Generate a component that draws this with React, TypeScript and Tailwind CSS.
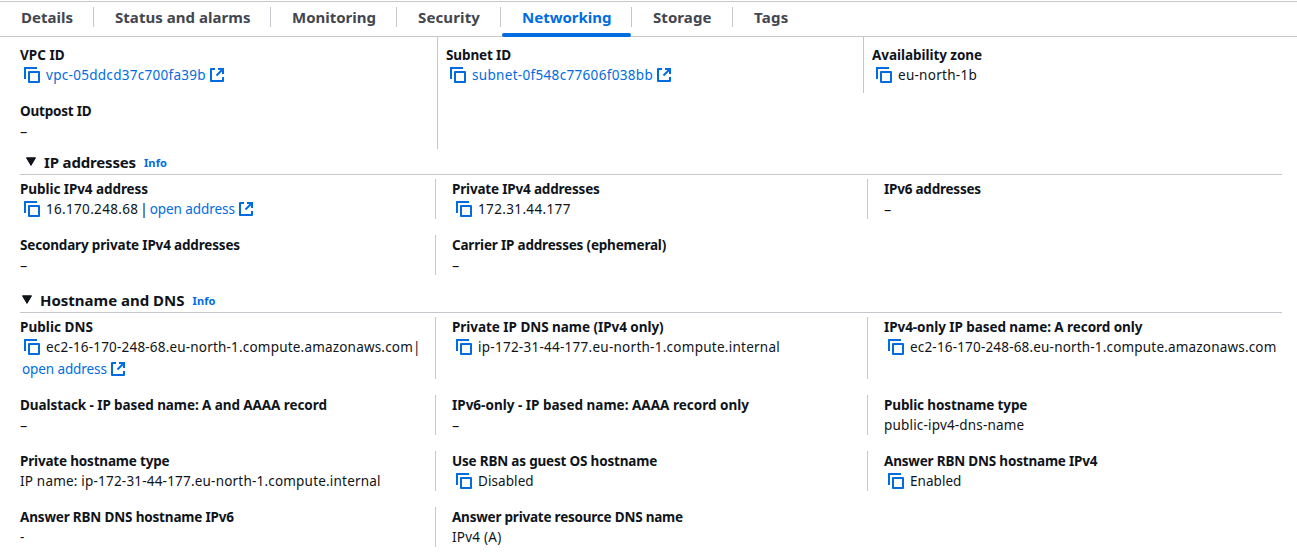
import type { ReactNode } from "react";

const CopyIcon = () => (
  <svg viewBox="0 0 16 16" className="ml-1 size-4 shrink-0" fill="none" stroke="#006ce0" strokeWidth="2">
    <path d="M1 12V1h12" />
    <path d="M5 5h10v10H5z" strokeLinejoin="round" />
  </svg>
);

const ExternalIcon = () => (
  <svg viewBox="0 0 16 16" className="size-4 shrink-0" fill="none" stroke="#006ce0" strokeWidth="2">
    <path d="M9 2h5v5" />
    <path d="m7.5 8.5 6-6" />
    <path d="M14 10v4H2V2h4" strokeLinejoin="round" />
  </svg>
);

const Caret = () => (
  <svg viewBox="0 0 12 10" className="mt-px h-[10px] w-3 shrink-0">
    <path d="M1.5.8h9L6 8.4z" fill="#0f141a" stroke="#0f141a" strokeLinejoin="round" />
  </svg>
);

const Dash = () => <div className="h-5 text-[14.5px] leading-5">–</div>;

function Field({ label, track, className = "", children }: { label: string; track: string; className?: string; children: ReactNode }) {
  return (
    <div className={`min-w-0 whitespace-nowrap border-[#c6c6cd] ${className}`}>
      <div className={`h-5 text-[13.5px] font-bold leading-5 ${track}`}>{label}</div>
      <div className="leading-5">{children}</div>
    </div>
  );
}

const Row = ({ children }: { children: ReactNode }) => <div className="flex h-5 items-center">{children}</div>;

function Section({ title, track, className, children }: { title: string; track: string; className: string; children: ReactNode }) {
  return (
    <section className="mr-[15px] ml-5">
      <header className={`flex h-[26px] items-center border-b border-[#c6c6cd] ${className}`}>
        <Caret />
        <h2 className={`ml-[7px] text-[15px] font-bold leading-6 ${track}`}>{title}</h2>
        <a className="mt-[3px] ml-2 text-[11px] font-bold leading-5 tracking-[0.11px] text-[#006ce0]">Info</a>
      </header>
      <div className="mt-1 grid grid-cols-[415px_432px_1fr] gap-y-4">{children}</div>
    </section>
  );
}

const tabs = [
  { name: "Details", box: "w-[94px] tracking-[0.01px]" },
  { name: "Status and alarms", box: "w-[177px] tracking-[0.04px]" },
  { name: "Monitoring", box: "w-[126px] tracking-[-0.01px]" },
  { name: "Security", box: "w-[104px] tracking-[0.13px]" },
  { name: "Networking", box: "w-[131px] tracking-[-0.01px]" },
  { name: "Storage", box: "w-[101px] tracking-[0.07px]" },
  { name: "Tags", box: "w-[80px] tracking-[0.26px]" },
];

const divided = "border-l pl-4";

export default function App() {
  return (
    <main className="h-[556px] overflow-hidden bg-white pt-px font-['Noto_Sans',sans-serif] text-[13.5px] text-[#0f141a]">
      <nav className="flex h-9 border-y border-[#c6c6cd]">
        {tabs.map((t, i) => (
          <div key={t.name} className={`relative flex h-[34px] items-start pt-[5px] text-[15px] font-bold text-[#424650] ${t.box}`}>
            <span className={`flex h-5 w-full items-center border-[#c6c6cd] pl-[21px] ${i < tabs.length - 1 ? "border-r" : ""} ${t.name === "Networking" ? "text-[#006ce0]" : ""}`}>
              {t.name}
            </span>
            {t.name === "Networking" && <span className="absolute -bottom-px left-px h-1 w-[129px] rounded-full bg-[#006ce0]" />}
          </div>
        ))}
      </nav>

      <div className="grid h-[112px] grid-cols-[417px_426px_1fr] pl-5">
        <div className="flex flex-col gap-4 pt-2">
          <Field label="VPC ID" track="tracking-[0.01px]">
            <Row>
              <CopyIcon />
              <span className="mr-[3px] ml-1.5 text-[#006ce0] tracking-[0.29px]">vpc-05ddcd37c700fa39b</span>
              <ExternalIcon />
            </Row>
          </Field>
          <Field label="Outpost ID" track="tracking-[-0.21px]"><Dash /></Field>
        </div>
        <Field label="Subnet ID" track="tracking-[-0.12px]" className="border-l pt-2 pl-2">
          <Row>
            <CopyIcon />
            <span className="mr-[3px] ml-1.5 text-[#006ce0] tracking-[0.32px]">subnet-0f548c77606f038bb</span>
            <ExternalIcon />
          </Row>
        </Field>
        <Field label="Availability zone" track="tracking-[-0.05px]" className="h-14 border-l pt-2 pl-2">
          <Row>
            <CopyIcon />
            <span className="ml-1.5 tracking-[0.27px]">eu-north-1b</span>
          </Row>
        </Field>
      </div>

      <Section title="IP addresses" track="tracking-[-0.16px]" className="pl-[5px]">
        <Field label="Public IPv4 address" track="tracking-[-0.07px]">
          <Row>
            <CopyIcon />
            <span className="ml-1.5 tracking-[0.32px]">16.170.248.68</span>
            <span className="mr-0.5 ml-0.5">|</span>
            <span className="mr-[3px] text-[#006ce0] tracking-[-0.06px]">open address</span>
            <ExternalIcon />
          </Row>
        </Field>
        <Field label="Private IPv4 addresses" track="tracking-[-0.18px]" className={divided}>
          <Row>
            <CopyIcon />
            <span className="ml-1.5 tracking-[0.36px]">172.31.44.177</span>
          </Row>
        </Field>
        <Field label="IPv6 addresses" track="tracking-[-0.22px]" className={divided}><Dash /></Field>
        <Field label="Secondary private IPv4 addresses" track="tracking-[-0.17px]"><Dash /></Field>
        <Field label="Carrier IP addresses (ephemeral)" track="tracking-[-0.19px]" className={divided}><Dash /></Field>
      </Section>

      <div className="h-3" />

      <Section title="Hostname and DNS" track="tracking-[-0.01px]" className="pl-px">
        <Field label="Public DNS" track="tracking-[0.05px]">
          <Row>
            <CopyIcon />
            <span className="ml-1.5 tracking-[0.19px]">ec2-16-170-248-68.eu-north-1.compute.amazonaws.com</span>
            <span>|</span>
          </Row>
          <div className="mt-0.5 flex h-5 items-center pl-0.5">
            <span className="mr-[3px] text-[#006ce0] tracking-[-0.1px]">open address</span>
            <ExternalIcon />
          </div>
        </Field>
        <Field label="Private IP DNS name (IPv4 only)" track="tracking-[-0.04px]" className={divided}>
          <Row>
            <CopyIcon />
            <span className="ml-1.5 tracking-[0.26px]">ip-172-31-44-177.eu-north-1.compute.internal</span>
          </Row>
        </Field>
        <Field label="IPv4-only IP based name: A record only" track="tracking-[-0.06px]" className={divided}>
          <Row>
            <CopyIcon />
            <span className="ml-1.5 tracking-[0.18px]">ec2-16-170-248-68.eu-north-1.compute.amazonaws.com</span>
          </Row>
        </Field>
        <Field label="Dualstack - IP based name: A and AAAA record" track="tracking-[-0.08px]"><Dash /></Field>
        <Field label="IPv6-only - IP based name: AAAA record only" track="tracking-[0.01px]" className={divided}><Dash /></Field>
        <Field label="Public hostname type" track="tracking-[-0.13px]" className={divided}>
          <span className="tracking-[0.18px]">public-ipv4-dns-name</span>
        </Field>
        <Field label="Private hostname type" track="tracking-[-0.18px]">
          <span className="tracking-[0.2px]">IP name: ip-172-31-44-177.eu-north-1.compute.internal</span>
        </Field>
        <Field label="Use RBN as guest OS hostname" track="tracking-[-0.19px]" className={divided}>
          <Row>
            <CopyIcon />
            <span className="ml-1.5 tracking-[0.08px]">Disabled</span>
          </Row>
        </Field>
        <Field label="Answer RBN DNS hostname IPv4" track="tracking-[-0.19px]" className={divided}>
          <Row>
            <CopyIcon />
            <span className="ml-1.5 tracking-[0.05px]">Enabled</span>
          </Row>
        </Field>
        <Field label="Answer RBN DNS hostname IPv6" track="tracking-[-0.17px]">-</Field>
        <Field label="Answer private resource DNS name" track="tracking-[-0.22px]" className={divided}>
          <span className="tracking-[0.24px]">IPv4 (A)</span>
        </Field>
      </Section>
    </main>
  );
}
